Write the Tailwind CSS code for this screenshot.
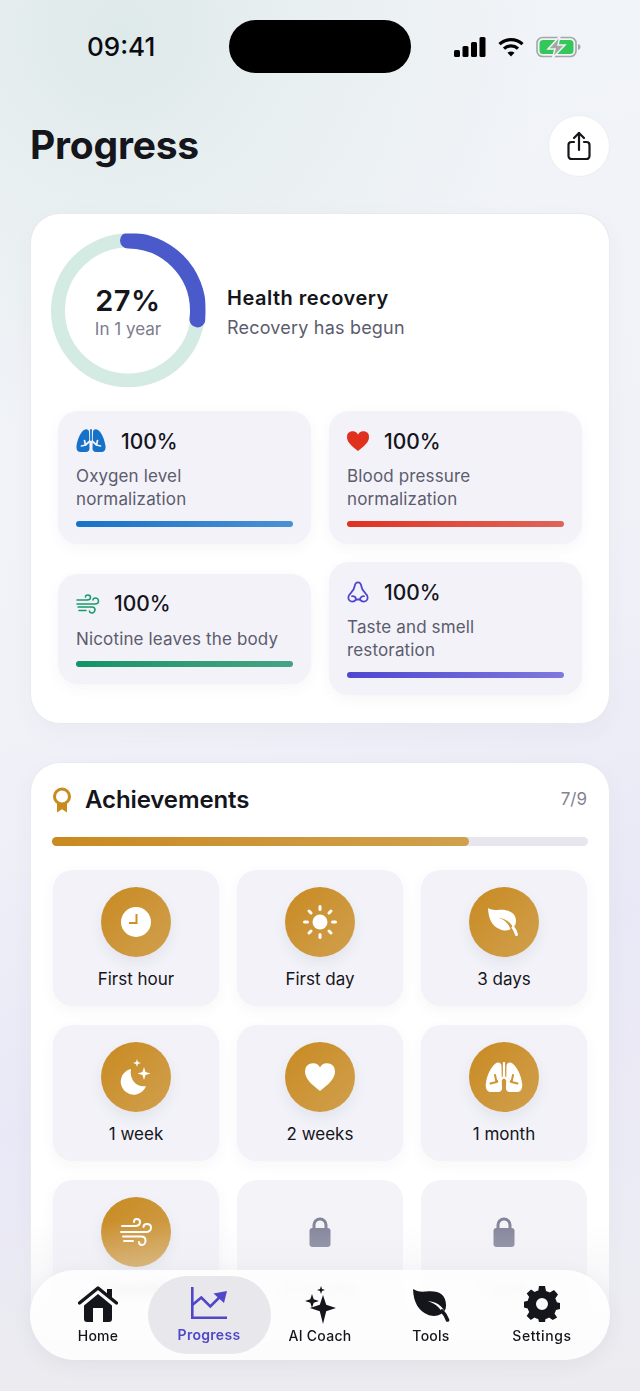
<!DOCTYPE html>
<html lang="en">
<head>
  <meta charset="UTF-8"/>
  <meta name="viewport" content="width=device-width, initial-scale=1.0"/>
  <title>Progress</title>
  <script src="https://cdn.jsdelivr.net/npm/@tailwindcss/browser@4"></script>
</head>
<body class="font-[Inter,sans-serif] text-[#15151c]">
  <div class="relative w-[640px] h-[1391px] overflow-hidden bg-[radial-gradient(circle_at_120px_30px,#dee9e9_0,#e8eff1_170px,rgba(240,243,248,0)_420px),linear-gradient(160deg,#f0f4f7_0%,#f1f2f8_45%,#e9e8f6_70%,#eeeef4_100%)]">

    <!-- status bar -->
    <div class="flex items-center h-[53px] mt-[20px] absolute top-0 left-0 w-full">
      <div class="w-[229px] pl-[87px] text-[26px] leading-none font-medium text-[#0b0b10]">09:41</div>
      <div class="w-[182px] h-[53px] rounded-full bg-black"></div>
      <div class="flex items-center pl-[43px] gap-[12px]">
        <svg class="w-[32px] h-[20px]" viewBox="0 0 32 20" fill="#000"><rect x="0" y="13" width="6" height="7" rx="1.500"/><rect x="8.500" y="9" width="6" height="11" rx="1.500"/><rect x="17" y="5" width="6" height="15" rx="1.500"/><rect x="25.500" y="0" width="6" height="20" rx="1.500"/></svg>
        <svg class="w-[26px] h-[20px]" viewBox="0 0 26 20" fill="none" stroke="#000" stroke-width="3.200"><path d="M1.500 7.200C8 1 18 1 24.500 7.200"/><path d="M6 11.600c4-3.600 10-3.600 14 0"/><path d="M13 19.500l-3.500-3.800c2-1.600 5-1.600 7 0z" fill="#000" stroke="none"/></svg>
        <svg class="w-[46px] h-[22px]" viewBox="0 0 46 22"><rect x="1" y="1.500" width="39" height="19" rx="5.500" fill="none" stroke="#a3a8a5" stroke-width="1.600"/><rect x="3.500" y="4" width="34" height="14" rx="3.500" fill="#35c759"/><path d="M42 8v6c1.500-.4 2.500-1.600 2.500-3S43.500 8.400 42 8z" fill="#a3a8a5"/><path d="M24 0L12 13h7l-2.500 9L29 9h-7z" fill="#a3a8a5" stroke="#f1f4f7" stroke-width="1.500"/></svg>
      </div>
    </div>

    <!-- header -->
    <div class="flex items-center justify-between pt-[115px] px-[30px]">
      <h1 class="text-[39px] leading-none font-bold tracking-[-0.2px] pb-[3px]">Progress</h1>
      <button class="w-[62px] h-[62px] rounded-full bg-white border border-[#eceef1] flex items-center justify-center">
        <svg class="w-[26px] h-[30px]" viewBox="0 0 26 30" fill="none" stroke="#15151c" stroke-width="2.200" stroke-linecap="round" stroke-linejoin="round"><path d="M8 11H5.500A3 3 0 0 0 2.500 14v11a3 3 0 0 0 3 3h15a3 3 0 0 0 3-3V14a3 3 0 0 0-3-3H18"/><path d="M13 19V2"/><path d="M8 7l5-5 5 5"/></svg>
      </button>
    </div>

    <div class="px-[30px] mt-[36px] flex flex-col gap-[38px]">
      <!-- health recovery -->
      <section class="bg-white rounded-[30px] border border-[#e9e9f0] shadow-[0_8px_24px_rgba(70,70,110,0.04)] pt-[19px] px-[27px] pb-[28px]">
        <div class="flex items-center gap-[22px] -ml-[7px]">
          <div class="relative w-[154px] h-[155px]">
            <svg class="w-[154px] h-[155px] -rotate-90" viewBox="0 0 154 154" fill="none">
              <circle cx="77" cy="77" r="70" stroke="#d4ebe4" stroke-width="14"/>
              <circle cx="77" cy="77" r="70" stroke="#4b5acb" stroke-width="16" stroke-linecap="round" stroke-dasharray="118.800 440"/>
            </svg>
            <div class="absolute inset-0 flex flex-col items-center justify-center pt-[1px]">
              <div class="text-[29px] leading-[34px] font-semibold tracking-[0.5px]">27%</div>
              <div class="text-[17px] leading-[20px] text-[#7c7c8c] mt-[1px]">In 1 year</div>
            </div>
          </div>
          <div class="mt-[3px]">
            <div class="text-[20px] leading-[26px] font-semibold tracking-[0.5px]">Health recovery</div>
            <div class="text-[18px] leading-[24px] text-[#5c5c6e] mt-[5px] tracking-[0.2px]">Recovery has begun</div>
          </div>
        </div>

        <div class="grid grid-cols-2 gap-[18px] items-center mt-[23px]">
          <div class="bg-[#f2f2f8] rounded-[20px] shadow-[0_4px_14px_rgba(70,70,110,0.05)] px-[18px] py-[17px]">
            <div class="flex items-center gap-[15px] h-[26px]">
              <svg class="w-[30px] h-[24px]" viewBox="0 0 30 24">
                <path d="M13 3c0-2.500-2.800-3.500-5-2C4.500 3.500 1.500 10 .5 17c-.4 3.500 1 6 4 6H10c2 0 3.500-1.300 3.500-3.500z M17 3c0-2.500 2.800-3.500 5-2 3.500 2.500 6.500 9 7.500 16 .4 3.500-1 6-4 6H20c-2 0-3.500-1.300-3.500-3.500z" fill="#1672c9"/>
                <path d="M15 11l-5.500 5M15 11l5.500 5M8.500 11.500l1 4.500-4 1M21.500 11.500l-1 4.500 4 1" fill="none" stroke="#f2f2f8" stroke-width="1.700" stroke-linecap="round"/>
                <path d="M15 1v10" stroke="#1672c9" stroke-width="1.800" stroke-linecap="round"/>
              </svg>
              <span class="text-[21px] leading-none font-medium">100%</span>
            </div>
            <p class="text-[17px] leading-[23px] text-[#5c5c6e] mt-[11px] tracking-[0.15px]">Oxygen level<br/>normalization</p>
            <div class="h-[6px] rounded-full mt-[10px] bg-linear-to-r from-[#1672c9] to-[#4a90d4]"></div>
          </div>

          <div class="bg-[#f2f2f8] rounded-[20px] shadow-[0_4px_14px_rgba(70,70,110,0.05)] px-[18px] py-[17px]">
            <div class="flex items-center gap-[15px] h-[26px]">
              <svg class="w-[22px] h-[20px]" viewBox="0 0 22 20"><path d="M11 20C4 14.500 0 11 0 6a5.700 5.700 0 0 1 11-2.200A5.700 5.700 0 0 1 22 6c0 5-4 8.500-11 14z" fill="#e0301e"/></svg>
              <span class="text-[21px] leading-none font-medium">100%</span>
            </div>
            <p class="text-[17px] leading-[23px] text-[#5c5c6e] mt-[11px] tracking-[0.15px]">Blood pressure<br/>normalization</p>
            <div class="h-[6px] rounded-full mt-[10px] bg-linear-to-r from-[#e0301e] to-[#de6459]"></div>
          </div>

          <div class="bg-[#f2f2f8] rounded-[20px] shadow-[0_4px_14px_rgba(70,70,110,0.05)] px-[18px] py-[17px]">
            <div class="flex items-center gap-[14px] h-[26px]">
              <svg class="w-[24px] h-[20px]" viewBox="0 0 24 20" fill="none" stroke="#189a6c" stroke-width="1.500" stroke-linecap="round"><path d="M1 6h10c2 0 3.500-1 3.500-2.500S13 1 11.500 1 9.500 2 9.500 3"/><path d="M1 10h18c2 0 3.500-1.300 3.500-3S21 4 19.500 4 17 5 17 6"/><path d="M2 13h14c2 0 3 1.200 3 2.800S17.500 19 16 19s-2.500-1-2.500-2"/><path d="M3 16.500h7"/></svg>
              <span class="text-[21px] leading-none font-medium">100%</span>
            </div>
            <p class="text-[17px] leading-[23px] text-[#5c5c6e] mt-[11px] tracking-[0.15px]">Nicotine leaves the body</p>
            <div class="h-[6px] rounded-full mt-[10px] bg-linear-to-r from-[#109467] to-[#45a384]"></div>
          </div>

          <div class="bg-[#f2f2f8] rounded-[20px] shadow-[0_4px_14px_rgba(70,70,110,0.05)] px-[18px] py-[17px]">
            <div class="flex items-center gap-[15px] h-[26px]">
              <svg class="w-[22px] h-[22px]" viewBox="0 0 24 24" fill="none" stroke="#4f46d0" stroke-width="2" stroke-linecap="round" stroke-linejoin="round"><path d="M12 1.500c-2.200 0-3.300 1.700-3.700 4.300-.4 2.800-1.800 5-4 7.200C2.700 14.600 1.500 16 1.500 18c0 2.500 1.800 4.500 4.300 4.500 1.800 0 3.200-1 4-2.300h4.400c.8 1.300 2.200 2.300 4 2.300 2.500 0 4.300-2 4.300-4.500 0-2-1.200-3.400-2.800-5-2.200-2.200-3.600-4.400-4-7.200-.4-2.600-1.500-4.300-3.700-4.300z"/><path d="M5.500 16.500c2.500 0 4.300 1.600 4.300 3.700M18.500 16.500c-2.500 0-4.300 1.600-4.300 3.700"/></svg>
              <span class="text-[21px] leading-none font-medium">100%</span>
            </div>
            <p class="text-[17px] leading-[23px] text-[#5c5c6e] mt-[11px] tracking-[0.15px]">Taste and smell<br/>restoration</p>
            <div class="h-[6px] rounded-full mt-[10px] bg-linear-to-r from-[#4f46d0] to-[#7f78de]"></div>
          </div>
        </div>
      </section>

      <!-- achievements -->
      <section class="bg-white rounded-[30px] border border-[#e9e9f0] shadow-[0_8px_24px_rgba(70,70,110,0.04)] pt-[21px] px-[21px] pb-[24px]">
        <div class="flex items-center justify-between h-[32px]">
          <div class="flex items-center gap-[13px]">
            <svg class="w-[20px] h-[26px]" viewBox="0 0 20 26"><path d="M5 15v10.500l5-3.200 5 3.200V15z" fill="#c98a1e"/><circle cx="10" cy="9.500" r="7.500" fill="#fff" stroke="#c98a1e" stroke-width="3"/></svg>
            <h2 class="text-[24px] leading-none font-semibold tracking-[-0.1px]">Achievements</h2>
          </div>
          <span class="text-[17px] text-[#84848f] pr-[1px]">7/9</span>
        </div>
        <div class="h-[9px] rounded-full bg-[#e7e6ef] mt-[21px]">
          <div class="h-full w-[417px] rounded-full bg-linear-to-r from-[#c98a1e] to-[#d0a04c]"></div>
        </div>

        <div class="grid grid-cols-3 gap-x-[18px] gap-y-[19px] mt-[24px] mx-[1px]">
          <div class="h-[136px] bg-[#f2f2f8] rounded-[20px] shadow-[0_4px_14px_rgba(70,70,110,0.05)] flex flex-col items-center pt-[17px]">
            <div class="w-[70px] h-[70px] rounded-full bg-linear-to-br from-[#c98a1e] to-[#d0a04c] shadow-[0_6px_14px_rgba(70,70,110,0.08)] flex items-center justify-center">
              <svg class="w-[30px] h-[30px]" viewBox="0 0 30 30"><circle cx="15" cy="15" r="15" fill="#fff"/><path d="M15.500 7v9H8" fill="none" stroke="#cb9027" stroke-width="2"/></svg>
            </div>
            <span class="text-[17px] leading-[24px] mt-[10px]">First hour</span>
          </div>
          <div class="h-[136px] bg-[#f2f2f8] rounded-[20px] shadow-[0_4px_14px_rgba(70,70,110,0.05)] flex flex-col items-center pt-[17px]">
            <div class="w-[70px] h-[70px] rounded-full bg-linear-to-br from-[#c98a1e] to-[#d0a04c] shadow-[0_6px_14px_rgba(70,70,110,0.08)] flex items-center justify-center">
              <svg class="w-[34px] h-[34px]" viewBox="0 0 34 34" fill="#fff" stroke="#fff" stroke-width="3" stroke-linecap="round"><circle cx="17" cy="17" r="7.500" stroke="none"/><path d="M17 1.500v3M17 29.500v3M1.500 17h3M29.500 17h3M6 6l2 2M26 26l2 2M6 28l2-2M26 8l2-2"/></svg>
            </div>
            <span class="text-[17px] leading-[24px] mt-[10px]">First day</span>
          </div>
          <div class="h-[136px] bg-[#f2f2f8] rounded-[20px] shadow-[0_4px_14px_rgba(70,70,110,0.05)] flex flex-col items-center pt-[17px]">
            <div class="w-[70px] h-[70px] rounded-full bg-linear-to-br from-[#c98a1e] to-[#d0a04c] shadow-[0_6px_14px_rgba(70,70,110,0.08)] flex items-center justify-center">
              <svg class="w-[34px] h-[30px]" viewBox="0 0 34 30"><path d="M1 1c2 1.500 5 2 10 2 9-1 18 2 18 11 0 3-1 5-3 6.500-3-6-8-9-15-10 6 2 10 5 12.500 11.500-3 2-7 2-11 0C5 19 1.500 12 1 1z" fill="#fff"/><path d="M26 20.500c1.500 1.700 2.700 4 3.500 7" fill="none" stroke="#fff" stroke-width="3" stroke-linecap="round"/></svg>
            </div>
            <span class="text-[17px] leading-[24px] mt-[10px]">3 days</span>
          </div>
          <div class="h-[136px] bg-[#f2f2f8] rounded-[20px] shadow-[0_4px_14px_rgba(70,70,110,0.05)] flex flex-col items-center pt-[17px]">
            <div class="w-[70px] h-[70px] rounded-full bg-linear-to-br from-[#c98a1e] to-[#d0a04c] shadow-[0_6px_14px_rgba(70,70,110,0.08)] flex items-center justify-center">
              <svg class="w-[32px] h-[36px]" viewBox="0 0 32 36" fill="#fff"><path d="M11 10a13 13 0 1 0 15 17c-9 2-17-6-15-17z"/><path d="M24 8l1.500 5 5 1.500-5 1.500-1.500 5-1.500-5-5-1.500 5-1.500z"/><path d="M17 0l.9 3.100 3.100.9-3.100.9L17 8l-.9-3.100L13 4l3.100-.9z"/></svg>
            </div>
            <span class="text-[17px] leading-[24px] mt-[10px]">1 week</span>
          </div>
          <div class="h-[136px] bg-[#f2f2f8] rounded-[20px] shadow-[0_4px_14px_rgba(70,70,110,0.05)] flex flex-col items-center pt-[17px]">
            <div class="w-[70px] h-[70px] rounded-full bg-linear-to-br from-[#c98a1e] to-[#d0a04c] shadow-[0_6px_14px_rgba(70,70,110,0.08)] flex items-center justify-center">
              <svg class="w-[30px] h-[28px]" viewBox="0 0 30 28"><path d="M15 28C5.500 20.500 0 15.500 0 8.200A8 8 0 0 1 15 4.400 8 8 0 0 1 30 8.200c0 7.300-5.500 12.300-15 19.800z" fill="#fff"/></svg>
            </div>
            <span class="text-[17px] leading-[24px] mt-[10px]">2 weeks</span>
          </div>
          <div class="h-[136px] bg-[#f2f2f8] rounded-[20px] shadow-[0_4px_14px_rgba(70,70,110,0.05)] flex flex-col items-center pt-[17px]">
            <div class="w-[70px] h-[70px] rounded-full bg-linear-to-br from-[#c98a1e] to-[#d0a04c] shadow-[0_6px_14px_rgba(70,70,110,0.08)] flex items-center justify-center">
              <svg class="w-[38px] h-[30px]" viewBox="0 0 38 30">
                <path d="M16.500 4c0-3-3.300-4.500-6-2.500C6 5 1.800 13 .8 22c-.4 4.500 1.500 8 5.200 8h7.500c2 0 3.500-1.300 3.500-3.500zM21.500 4c0-3 3.300-4.500 6-2.500C32 5 36.200 13 37.200 22c.4 4.500-1.500 8-5.200 8h-7.500c-2 0-3.500-1.300-3.500-3.500z" fill="#fff"/>
                <path d="M19 15l-7.500 5M19 15l7.500 5M10 13l1.500 7-6 1.500M28 13l-1.500 7 6 1.500" fill="none" stroke="#cd952f" stroke-width="2" stroke-linecap="round"/>
                <path d="M19 1v14l-5 3.500M19 15l5 3.500" fill="none" stroke="#fff" stroke-width="2.200" stroke-linecap="round"/>
              </svg>
            </div>
            <span class="text-[17px] leading-[24px] mt-[10px]">1 month</span>
          </div>
          <div class="h-[136px] bg-[#f2f2f8] rounded-[20px] shadow-[0_4px_14px_rgba(70,70,110,0.05)] flex flex-col items-center pt-[17px]">
            <div class="w-[70px] h-[70px] rounded-full bg-linear-to-br from-[#c98a1e] to-[#d0a04c] shadow-[0_6px_14px_rgba(70,70,110,0.08)] flex items-center justify-center">
              <svg class="w-[32px] h-[28px]" viewBox="0 0 32 28" fill="none" stroke="#fff" stroke-width="2" stroke-linecap="round"><path d="M2 8h13c3 0 5-1.500 5-4s-2-3-3.500-3S14 2 14 4"/><path d="M1 14h25c3 0 5-2 5-4.500S29 6 27 6s-3.500 1-3.500 3"/><path d="M3 18.500h18c3 0 4.500 1.700 4.500 4S24 27 22 27s-3-1-3-3"/><path d="M4 23h9"/></svg>
            </div>
            <span class="text-[17px] leading-[24px] mt-[10px]">3 months</span>
          </div>
          <div class="h-[136px] bg-[#f3f3f8] rounded-[20px] flex flex-col items-center pt-[17px]">
            <div class="w-[70px] h-[70px] flex items-center justify-center">
              <svg class="w-[22px] h-[30px]" viewBox="0 0 22 30"><path d="M5 14V8a6 6 0 0 1 12 0v6" fill="none" stroke="#82829a" stroke-width="3"/><rect x="0.500" y="11" width="21" height="19" rx="3" fill="#82829a"/></svg>
            </div>
            <span class="text-[17px] leading-[24px] mt-[10px] text-[#8b8b9b]">6 months</span>
          </div>
          <div class="h-[136px] bg-[#f3f3f8] rounded-[20px] flex flex-col items-center pt-[17px]">
            <div class="w-[70px] h-[70px] flex items-center justify-center">
              <svg class="w-[22px] h-[30px]" viewBox="0 0 22 30"><path d="M5 14V8a6 6 0 0 1 12 0v6" fill="none" stroke="#82829a" stroke-width="3"/><rect x="0.500" y="11" width="21" height="19" rx="3" fill="#82829a"/></svg>
            </div>
            <span class="text-[17px] leading-[24px] mt-[10px] text-[#8b8b9b]">1 year</span>
          </div>
        </div>
      </section>
    </div>

    <!-- fade under the tab bar -->
    <div class="absolute inset-x-0 bottom-0 h-[170px] bg-linear-to-b from-[#ebebf0]/0 via-[#ebebf0]/60 to-[#ebebf0]"></div>

    <!-- tab bar -->
    <nav class="absolute left-[30px] top-[1270px] w-[580px] h-[90px] rounded-[45px] bg-white/85 backdrop-blur-[5px] shadow-[0_6px_20px_rgba(60,60,90,0.06)] grid grid-cols-5 items-center px-[12.500px]">
      <a class="flex flex-col items-center">
        <svg class="w-[40px] h-[36px]" viewBox="0 0 40 36" fill="#15151c">
          <path d="M1.500 17L20 2l18.500 15" fill="none" stroke="#15151c" stroke-width="3.400" stroke-linecap="round" stroke-linejoin="round"/>
          <path d="M29 3h5v9l-5-4z"/>
          <path fill-rule="evenodd" d="M20 8l14 11.500V33a3 3 0 0 1-3 3H9a3 3 0 0 1-3-3V19.500zM15 22v14h10V22z"/>
        </svg>
        <span class="text-[14px] leading-[18px] font-medium mt-[5px] tracking-[0.25px]">Home</span>
      </a>
      <a class="flex flex-col items-center justify-center -mx-[6px] h-[78px] rounded-[39px] bg-[#e8e8ec]">
        <svg class="w-[36px] h-[32px]" viewBox="0 0 36 32" fill="none" stroke="#4f46c8" stroke-width="2.600">
          <path d="M1.300 0v30.700H36"/>
          <path d="M1.300 18l9-7.500 9 9 10-10"/>
          <path d="M36 4L22.500 6.500 33 16z" fill="#4f46c8" stroke="none"/>
        </svg>
        <span class="text-[14px] leading-[18px] font-semibold text-[#4f46c8] mt-[7px] tracking-[0.3px]">Progress</span>
      </a>
      <a class="flex flex-col items-center">
        <svg class="w-[32px] h-[38px]" viewBox="0 0 32 38" fill="#15151c">
          <path d="M19 9l3.200 9.800L32 22l-9.800 3.200L19 38l-3.200-12.800L6 22l9.800-3.200z"/>
          <path d="M8 8l1.700 5.300L15 15l-5.300 1.700L8 22l-1.700-5.300L1 15l5.300-1.700z"/>
          <path d="M17 0l1 3 3 1-3 1-1 3-1-3-3-1 3-1z"/>
        </svg>
        <span class="text-[14px] leading-[18px] font-medium mt-[3px] tracking-[0.3px]">AI Coach</span>
      </a>
      <a class="flex flex-col items-center">
        <svg class="w-[38px] h-[34px] mt-[2px]" viewBox="0 0 38 34">
          <path fill="#15151c" d="M1 1c3 2 7 3 13 2.500C26 2 34 6 34 17c0 2.500-.5 4.500-1.500 6-3-5-7-9-17-10 6 2 11 4.500 15 12-4 3-10 4-15 1.500C7 23 1.500 15 1 1z"/>
          <path d="M30 23c2 2 4 5 5.500 9" fill="none" stroke="#15151c" stroke-width="3.600" stroke-linecap="round"/>
        </svg>
        <span class="text-[14px] leading-[18px] font-medium mt-[5px] tracking-[0.25px]">Tools</span>
      </a>
      <a class="flex flex-col items-center">
        <svg class="w-[36px] h-[36px]" viewBox="0 0 36 36">
          <path fill="#15151c" fill-rule="evenodd" d="M15 0h6l1 5a13 13 0 0 1 3.800 1.600L30 4l4 4.500-2.700 4a13 13 0 0 1 1.500 3.700l3.200.8v6l-4 .9a13 13 0 0 1-1.500 3.600l2.600 4.100L28.800 34l-3.800-2.600a13 13 0 0 1-3.500 1.500L21 36h-6l-.8-3.100a13 13 0 0 1-3.600-1.500L6.800 34 2.700 30l2.500-3.900a13 13 0 0 1-1.500-3.600L0 21.500v-5.800l3.800-.9A13 13 0 0 1 5.200 11L2.700 7.500 7 3.500l3.800 2.600A13 13 0 0 1 14.300 4.600zM18 12a6 6 0 1 0 0 12 6 6 0 0 0 0-12z"/>
        </svg>
        <span class="text-[14px] leading-[18px] font-medium mt-[5px] tracking-[0.6px]">Settings</span>
      </a>
    </nav>
  </div>
</body>
</html>
